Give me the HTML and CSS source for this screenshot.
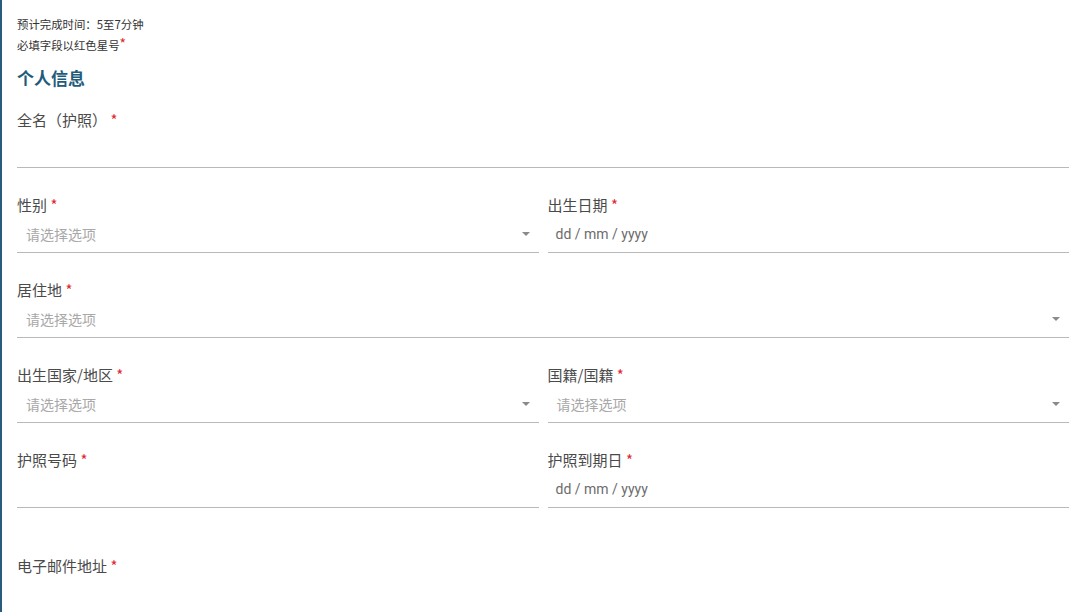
FILE: index.html
```html
<!DOCTYPE html>
<html lang="zh-CN">
<head>
<meta charset="utf-8">
<link rel="stylesheet" href="styles.css">
</head>
<body>
<div class="page">
  <p class="note">预计完成时间：5至7分钟</p>
  <p class="note">必填字段以红色星号<span class="req req-note">*</span></p>
  <h2 class="section-title">个人信息</h2>

  <div class="field">
    <label class="label">全名（护照） <span class="req">*</span></label>
    <div class="input"></div>
  </div>

  <div class="row">
    <div class="field">
      <label class="label">性别 <span class="req">*</span></label>
      <div class="input select"><span class="placeholder">请选择选项</span><span class="caret"></span></div>
    </div>
    <div class="field">
      <label class="label">出生日期 <span class="req">*</span></label>
      <div class="input"><span class="date">dd / mm / yyyy</span></div>
    </div>
  </div>

  <div class="field">
    <label class="label">居住地 <span class="req">*</span></label>
    <div class="input select"><span class="placeholder">请选择选项</span><span class="caret"></span></div>
  </div>

  <div class="row">
    <div class="field">
      <label class="label">出生国家/地区 <span class="req">*</span></label>
      <div class="input select"><span class="placeholder">请选择选项</span><span class="caret"></span></div>
    </div>
    <div class="field">
      <label class="label">国籍/国籍 <span class="req">*</span></label>
      <div class="input select"><span class="placeholder">请选择选项</span><span class="caret"></span></div>
    </div>
  </div>

  <div class="row">
    <div class="field">
      <label class="label">护照号码 <span class="req">*</span></label>
      <div class="input"></div>
    </div>
    <div class="field">
      <label class="label">护照到期日 <span class="req">*</span></label>
      <div class="input"><span class="date">dd / mm / yyyy</span></div>
    </div>
  </div>

  <div class="field field-spaced">
    <label class="label">电子邮件地址 <span class="req">*</span></label>
    <div class="input"></div>
  </div>
</div>
</body>
</html>
```

FILE: styles.css
```css
html, body {
  margin: 0;
  padding: 0;
  background: #ffffff;
}
body {
  font-family: "Noto Sans CJK SC", "Noto Sans", sans-serif;
  color: #444;
  overflow: hidden;
}
.page {
  border-left: 2px solid #2b5b7b;
  padding: 14px 11px 0 15px;
  min-height: 612px;
  box-sizing: border-box;
}
.note {
  margin: 0;
  font-size: 11.4px;
  line-height: 21px;
  color: #333;
}
.req {
  color: #e2262f;
}
.req-note {
  font-size: 14px;
  line-height: 10px;
  vertical-align: 1px;
}
.section-title {
  margin: 10px 0 19px;
  font-size: 17px;
  line-height: 24px;
  font-weight: 700;
  color: #1f5c7c;
}
.row {
  display: grid;
  grid-template-columns: 1fr 1fr;
  column-gap: 9px;
}
.field {
  margin-bottom: 26px;
}
.field-spaced {
  margin-top: 21px;
}
.label {
  display: block;
  font-size: 15px;
  line-height: 22px;
  color: #4a4a4a;
}
.input {
  height: 36px;
  border-bottom: 1px solid #b9b9b9;
  display: flex;
  align-items: center;
  padding: 0 9px;
}
.placeholder {
  font-size: 14px;
  color: #a8a8a8;
}
.date {
  font-family: Roboto, "Noto Sans", sans-serif;
  font-size: 14px;
  color: #6c6c6c;
  margin-left: -1px;
}
.caret {
  margin-left: auto;
  width: 0;
  height: 0;
  border-left: 4px solid transparent;
  border-right: 4px solid transparent;
  border-top: 4px solid #8a8a8a;
}
```
